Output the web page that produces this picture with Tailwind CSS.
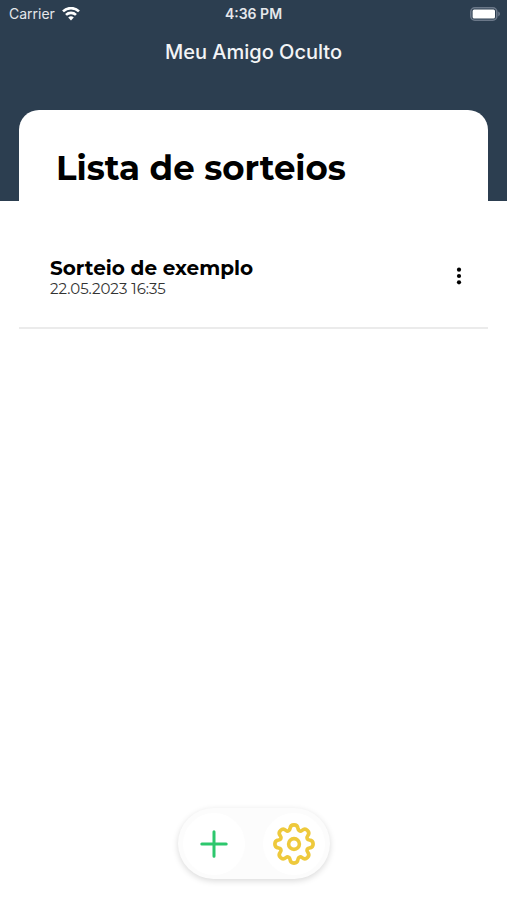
<!DOCTYPE html>
<html lang="pt-BR">
<head>
    <meta charset="UTF-8">
    <meta name="viewport" content="width=device-width, initial-scale=1.0">
    <title>Meu Amigo Oculto</title>
    <script src="https://cdn.jsdelivr.net/npm/@tailwindcss/browser@4"></script>
</head>
<body class="flex flex-col min-h-screen bg-white text-black font-['Montserrat','Inter',sans-serif]">
    <header class="bg-[#2c3e50] px-5">
        <!-- Status bar -->
        <div class="-mx-3 grid grid-cols-3 items-center h-7 text-sm text-gray-200 font-['Inter',sans-serif]">
            <div class="flex items-center gap-[7px] pl-px">
                <span>Carrier</span>
                <svg class="w-[18px] h-[14px]" viewBox="0 0 18 14" fill="none" stroke="#fff" stroke-width="2.6">
                    <path d="M1 4.4a11.4 11.4 0 0 1 16 0"/>
                    <path d="M4 7.9a7.1 7.1 0 0 1 10 0"/>
                    <path d="M9 13.4 6.2 10.6a4 4 0 0 1 5.6 0z" fill="#fff" stroke="none"/>
                </svg>
            </div>
            <span class="text-center font-semibold">4:36 PM</span>
            <svg class="justify-self-end w-[31px] h-[14px] -mr-0.5" viewBox="0 0 31 14">
                <rect x="0.8" y="0.8" width="26" height="12.4" rx="4" fill="none" stroke="#6b7889" stroke-width="1.6"/>
                <rect x="2.6" y="2.6" width="22.4" height="8.8" rx="1.5" fill="#fff"/>
                <path d="M28.2 4.6c2.4 1 2.4 3.8 0 4.8z" fill="#6b7889"/>
            </svg>
        </div>

        <h1 class="h-[82px] pt-2 text-center text-xl leading-8 font-medium text-gray-100 font-['Inter',sans-serif]">Meu Amigo Oculto</h1>

        <div class="-mx-px bg-white rounded-t-[20px] h-[91px] pt-8 px-[37px]">
            <h2 class="text-[34px] leading-[52px] font-bold">Lista de sorteios</h2>
        </div>
    </header>

    <main class="flex-1 px-[19px] pt-9">
        <ul>
            <li class="flex items-center justify-between h-[92px] pl-[31px] pr-4 pb-3 border-b-2 border-[#ebebeb]">
                <div class="pt-0.5">
                    <h3 class="text-xl leading-6 font-bold">Sorteio de exemplo</h3>
                    <p class="text-[15px] leading-[18px] text-[#333]">22.05.2023 16:35</p>
                </div>
                <button type="button" aria-label="Opções" class="px-1 cursor-pointer">
                    <svg class="w-[18px] h-[18px]" viewBox="0 0 18 18" fill="#000">
                        <circle cx="9" cy="2.7" r="2.1"/>
                        <circle cx="9" cy="9" r="2.1"/>
                        <circle cx="9" cy="15.3" r="2.1"/>
                    </svg>
                </button>
            </li>
        </ul>
    </main>

    <!-- Bottom actions -->
    <nav class="flex items-center justify-between self-center w-[152px] h-[71px] mb-[21px] px-[5px] rounded-full bg-[#fcfcfc] shadow-[0_2px_6px_rgba(0,0,0,0.15)]">
        <button type="button" aria-label="Novo sorteio" class="flex items-center justify-center size-[62px] rounded-full bg-white cursor-pointer">
            <svg class="size-7" viewBox="0 0 28 28" fill="none" stroke="#2dc76d" stroke-width="3" stroke-linecap="round">
                <path d="M14 1.8v24.4M1.8 14h24.4"/>
            </svg>
        </button>
        <button type="button" aria-label="Configurações" class="flex items-center justify-center size-[62px] rounded-full bg-white cursor-pointer">
            <svg class="size-[42px]" viewBox="-21 -21 42 42" fill="none" stroke="#eec93c" stroke-width="3.6" stroke-linejoin="round">
                <path d="M15.4 -4C20.4 -3.4 20.4 3.4 15.4 4C13 4.4 12.2 6.2 13.7 8.1C16.8 12 12 16.8 8.1 13.7C6.2 12.2 4.4 13 4 15.4C3.4 20.4 -3.4 20.4 -4 15.4C-4.4 13 -6.2 12.2 -8.1 13.7C-12 16.8 -16.8 12 -13.7 8.1C-12.2 6.2 -13 4.4 -15.4 4C-20.4 3.4 -20.4 -3.4 -15.4 -4C-13 -4.4 -12.2 -6.2 -13.7 -8.1C-16.8 -12 -12 -16.8 -8.1 -13.7C-6.2 -12.2 -4.4 -13 -4 -15.4C-3.4 -20.4 3.4 -20.4 4 -15.4C4.4 -13 6.2 -12.2 8.1 -13.7C12 -16.8 16.8 -12 13.7 -8.1C12.2 -6.2 13 -4.4 15.4 -4Z"/>
                <circle r="5.4"/>
            </svg>
        </button>
    </nav>
</body>
</html>
